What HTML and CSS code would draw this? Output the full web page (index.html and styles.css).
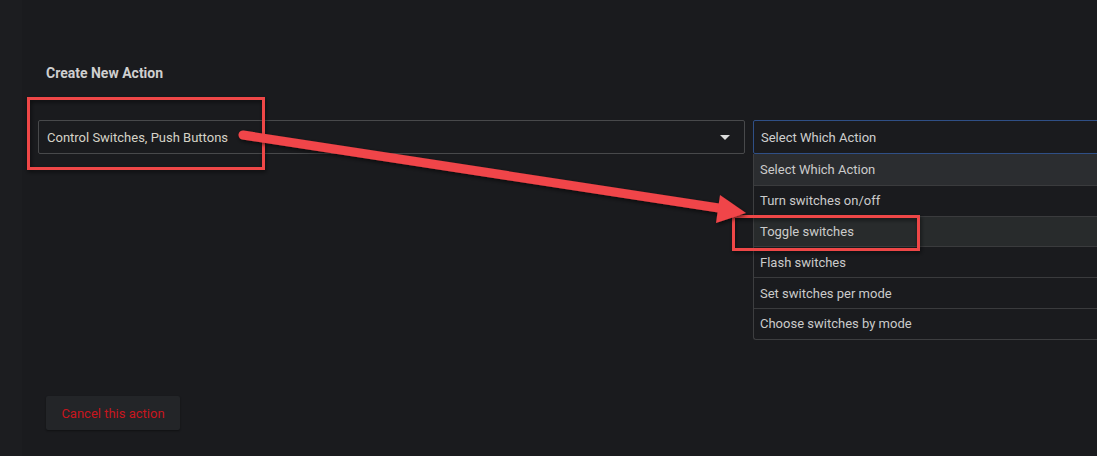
FILE: index.html
```html
<!DOCTYPE html>
<html>
<head>
<meta charset="utf-8">
<link rel="stylesheet" href="styles.css">
</head>
<body>
<div class="page">
  <aside class="strip"></aside>
  <main class="main">
    <h2 class="title">Create New Action</h2>
    <div class="row">
      <div class="select first">
        <span class="value">Control Switches, Push Buttons</span>
        <span class="caret"></span>
      </div>
      <div class="select-wrap">
        <div class="select second">
          <span class="value">Select Which Action</span>
        </div>
        <ul class="menu">
          <li class="item active">Select Which Action</li>
          <li class="item">Turn switches on/off</li>
          <li class="item hover">Toggle switches</li>
          <li class="item">Flash switches</li>
          <li class="item">Set switches per mode</li>
          <li class="item">Choose switches by mode</li>
        </ul>
      </div>
    </div>
    <button class="cancel">Cancel this action</button>
  </main>
  <svg class="annot" width="1097" height="456" viewBox="0 0 1097 456">
    <defs>
      <filter id="sh" x="-10%" y="-50%" width="120%" height="200%">
        <feDropShadow dx="1" dy="2" stdDeviation="2" flood-color="#000" flood-opacity="0.6"/>
      </filter>
    </defs>
    <g filter="url(#sh)" fill="none" stroke="#ee4646" stroke-width="3">
      <rect x="28.5" y="98.5" width="235" height="70"/>
      <rect x="733.5" y="216.5" width="185" height="33"/>
    </g>
    <g filter="url(#sh)">
      <line x1="243" y1="135" x2="722" y2="208.5" stroke="#f04448" stroke-width="9" stroke-linecap="round"/>
      <polygon points="720,195 746,213 716,223" fill="#f04448"/>
    </g>
  </svg>
</div>
</body>
</html>
```

FILE: styles.css
```css
* { box-sizing: border-box; }
html, body {
  margin: 0;
  padding: 0;
  background: #1a1b1e;
  overflow: hidden;
}
body {
  width: 1097px;
  height: 456px;
  font-family: Roboto, "Liberation Sans", Arial, sans-serif;
}
.page {
  position: relative;
  display: flex;
  width: 1097px;
  height: 456px;
  overflow: hidden;
}
.strip {
  width: 22px;
  flex: none;
  background: #1c1d20;
}
.main {
  flex: 1;
  display: flex;
  flex-direction: column;
  padding: 63px 0 0 16px;
  min-width: 0;
  overflow: hidden;
}
.title {
  margin: 0 0 0 8px;
  font-size: 14px;
  line-height: 20px;
  font-weight: 700;
  color: #cfcfcf;
}
.row {
  display: flex;
  gap: 8px;
  margin-top: 37px;
}
.select {
  height: 34px;
  border: 1px solid #48494b;
  border-radius: 2px;
  background: #1a1b1e;
  display: flex;
  align-items: center;
  font-size: 13px;
  color: #d6d3c7;
}
.first {
  width: 707px;
  flex: none;
  padding: 0 14px 0 8px;
  justify-content: space-between;
}
.caret {
  width: 0;
  height: 0;
  border-left: 5px solid transparent;
  border-right: 5px solid transparent;
  border-top: 5px solid #dcdcdc;
}
.select-wrap {
  position: relative;
  flex: 1;
  margin-right: -4px;
}
.second {
  border-color: #2f4f86;
  padding-left: 7px;
  color: #cfcfcf;
}
.menu {
  position: absolute;
  left: 0;
  top: 34px;
  width: 100%;
  margin: 0;
  padding: 0;
  list-style: none;
  border-left: 1px solid #3d3e40;
  border-bottom: 1px solid #3d3e40;
  border-radius: 0 0 0 3px;
  background: #1a1b1e;
}
.item {
  height: 30.8px;
  display: flex;
  align-items: center;
  padding-left: 6px;
  font-size: 13px;
  color: #cbcbcb;
  border-top: 1px solid #3a3b3d;
}
.item:first-child { border-top: none; }
.item.active { background: #2b2d30; }
.item.hover { background: #282b2c; }
.cancel {
  align-self: flex-start;
  margin: 242px 0 0 8px;
  width: 134px;
  height: 34px;
  border: none;
  border-radius: 2px;
  background: #232528;
  color: #c8161e;
  font-family: Roboto, "Liberation Sans", Arial, sans-serif;
  font-size: 13px;
  padding: 0;
  box-shadow: 0 1px 2px rgba(0,0,0,0.4);
}
.annot {
  position: absolute;
  left: 0;
  top: 0;
  pointer-events: none;
}
```
